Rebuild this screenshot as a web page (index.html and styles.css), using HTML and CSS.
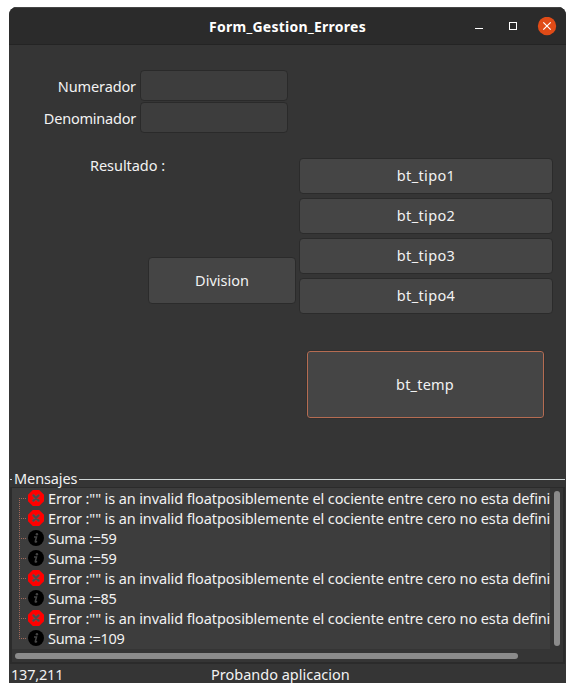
FILE: index.html
```html
<!DOCTYPE html>
<html lang="es">
<head>
<meta charset="utf-8">
<title>Form_Gestion_Errores</title>
<link rel="stylesheet" href="styles.css">
</head>
<body>
<svg class="defs" width="0" height="0" aria-hidden="true">
  <symbol id="error" viewBox="0 0 16 16">
    <path d="M4.8 0h6.4L16 4.8v6.4L11.2 16H4.8L0 11.2V4.8z" fill="#f00"/>
    <circle cx="8" cy="8" r="7.2" fill="#f00"/>
    <path d="M5.6 5.6l4.8 4.8M10.4 5.6l-4.8 4.8" stroke="#a83434" stroke-width="3" stroke-linecap="round"/>
    <path d="M5.4 5.4l5.2 5.2M10.6 5.4l-5.2 5.2" stroke="#4a4a4a" stroke-width="2" stroke-linecap="round"/>
  </symbol>
  <symbol id="info" viewBox="0 0 16 16">
    <circle cx="8" cy="8" r="8" fill="#000"/>
    <circle cx="8.9" cy="4.2" r="1.2" fill="#464646"/>
    <path d="M6 7h2.5L7.3 11.4q-.2.8.6.6l1.2-.6" fill="none" stroke="#464646" stroke-width="1.5"/>
  </symbol>
</svg>
<div class="window">
  <header class="titlebar">
    <h1>Form_Gestion_Errores</h1>
    <svg class="controls" width="84" height="20" viewBox="0 0 84 20">
      <path d="M2 11.5h8" stroke="#fff"/>
      <rect x="36.5" y="5.5" width="7" height="7" fill="none" stroke="#fff"/>
      <circle cx="74" cy="9" r="9.2" fill="#e04b17"/>
      <path d="M70.3 5.3l7.4 7.4M77.7 5.3l-7.4 7.4" stroke="#fff" stroke-width="1.2"/>
    </svg>
  </header>
  <main class="form">
    <div class="left">
      <label class="field"><span class="numerador">Numerador</span><input type="text"></label>
      <label class="field"><span class="denominador">Denominador</span><input type="text"></label>
      <div class="result">Resultado :</div>
      <button class="division">Division</button>
    </div>
    <div class="right">
      <button class="tipo">bt_tipo1</button>
      <button class="tipo">bt_tipo2</button>
      <button class="tipo">bt_tipo3</button>
      <button class="tipo">bt_tipo4</button>
      <button class="temp">bt_temp</button>
    </div>
  </main>
  <section class="messages">
    <h2><span>Mensajes</span></h2>
    <div class="scroller">
      <ul class="tree">
        <li><svg><use href="#error"/></svg><span class="err">Error :"" is an invalid floatposiblemente el cociente entre cero no esta defini</span></li>
        <li><svg><use href="#error"/></svg><span class="err">Error :"" is an invalid floatposiblemente el cociente entre cero no esta defini</span></li>
        <li><svg><use href="#info"/></svg><span class="sum">Suma :=59</span></li>
        <li><svg><use href="#info"/></svg><span class="sum">Suma :=59</span></li>
        <li><svg><use href="#error"/></svg><span class="err">Error :"" is an invalid floatposiblemente el cociente entre cero no esta defini</span></li>
        <li><svg><use href="#info"/></svg><span class="sum">Suma :=85</span></li>
        <li><svg><use href="#error"/></svg><span class="err">Error :"" is an invalid floatposiblemente el cociente entre cero no esta defini</span></li>
        <li><svg><use href="#info"/></svg><span class="sum">Suma :=109</span></li>
      </ul>
      <div class="vbar"><i></i></div>
      <div class="hbar"><i></i></div>
    </div>
  </section>
  <footer class="status"><span class="pos">137,211</span><span class="hint">Probando aplicacion</span></footer>
</div>
</body>
</html>
```
FILE: styles.css
```css
* { box-sizing: border-box; }
body {
  margin: 0;
  padding: 7px 9px 9px;
  height: 692px;
  background: #fff;
  color: #f2f2f2;
  font: 14.5px/20px "Noto Sans", "Open Sans", sans-serif;
  overflow: hidden;
}
.defs { position: absolute; }
.window {
  width: 557px;
  height: 676px;
  display: flex;
  flex-direction: column;
  background: #353535;
  border-radius: 8px 8px 0 0;
  overflow: hidden;
}
.titlebar {
  height: 38px;
  flex: none;
  display: grid;
  grid-template-columns: 84px 1fr 84px;
  padding: 10px 9px 0;
  background: #2b2b2b;
  border-top: 1px solid #454545;
  border-bottom: 1px solid #242424;
}
.titlebar h1 {
  grid-column: 2;
  margin: -1px 0 0;
  font-size: 14px;
  line-height: 20px;
  text-align: center;
  color: #fff;
  letter-spacing: .27px;
}
.controls { display: block; margin-top: -1px; }
.form { height: 425px; flex: none; display: flex; }
.left { width: 287px; padding-top: 25px; display: flex; flex-direction: column; }
.field {
  display: flex;
  align-items: center;
  justify-content: flex-end;
  gap: 4px;
  margin-right: 8px;
  margin-bottom: 1px;
}
.numerador { letter-spacing: -.12px; }
.denominador { letter-spacing: -.22px; }
input {
  width: 148px;
  height: 31px;
  border: 1px solid #2a2a2a;
  border-radius: 4px;
  background: #3d3d3d;
}
.result { margin: 21px 0 0 81px; height: 20px; letter-spacing: -.05px; }
.right { width: 270px; padding: 113px 13px 0 3px; display: flex; flex-direction: column; gap: 4px; }
button {
  height: 36px;
  padding: 0;
  flex: none;
  font: inherit;
  color: inherit;
  background: #454545;
  border: 1px solid #2b2b2b;
  border-radius: 4px;
}
.division { margin: 82px 0 0 139px; width: 148px; height: 47px; padding-bottom: 1px; }
.tipo { padding-bottom: 2px; letter-spacing: .35px; }
.temp {
  width: 239px;
  height: 69px;
  margin: 32px 0 0 7px;
  border-color: #303030;
  box-shadow: inset 0 0 0 1px #b56c52;
  letter-spacing: .2px;
  padding: 0 1px 2px 0;
}
.messages h2 {
  margin: 0;
  height: 17px;
  font-size: inherit;
  font-weight: normal;
  line-height: 19px;
  letter-spacing: -.1px;
  display: flex;
  align-items: center;
  gap: 2px;
  padding: 0 1px;
}
.messages h2::before, .messages h2::after { content: ""; height: 1px; background: #cfd6d6; margin-top: 1px; }
.messages h2::before { width: 2px; }
.messages h2::after { flex: 1; }
.scroller {
  margin: 0 1px;
  height: 177px;
  display: grid;
  grid-template: 161px 13px / 538px 12px;
  border: 2px solid #2b2b2b;
  border-top-width: 1px;
}
.tree {
  margin: 0;
  padding: 0;
  list-style: none;
  background: #3d3d3d;
  overflow: hidden;
}
.tree li {
  height: 20px;
  display: flex;
  align-items: center;
  padding-left: 7px;
  white-space: nowrap;
  background:
    repeating-linear-gradient(#a56a5a 0 1px, transparent 1px 2px) 7px 0 / 1px 100% no-repeat,
    repeating-linear-gradient(90deg, #a56a5a 0 1px, transparent 1px 2px) 7px 10px / 7px 1px no-repeat;
}
.tree li:first-child { background-position: 7px 10px, 7px 10px; }
.tree li:last-child { background-size: 1px 11px, 7px 1px; }
.tree svg { width: 16px; height: 16px; margin: 0 4px 0 9px; flex: none; }
.err { letter-spacing: -.118px; }
.sum { letter-spacing: -.3px; }
.vbar { padding: 3px 2px 0 4px; }
.vbar i { display: block; height: 155px; border-radius: 3px; background: #8b8b8b; }
.hbar { padding: 4px 0 0 3px; }
.hbar i { display: block; width: 503px; height: 6px; border-radius: 3px; background: #8b8b8b; }
.status { height: 19px; display: flex; line-height: 20px; padding-left: 2px; }
.pos { width: 200px; letter-spacing: -.2px; }
```
